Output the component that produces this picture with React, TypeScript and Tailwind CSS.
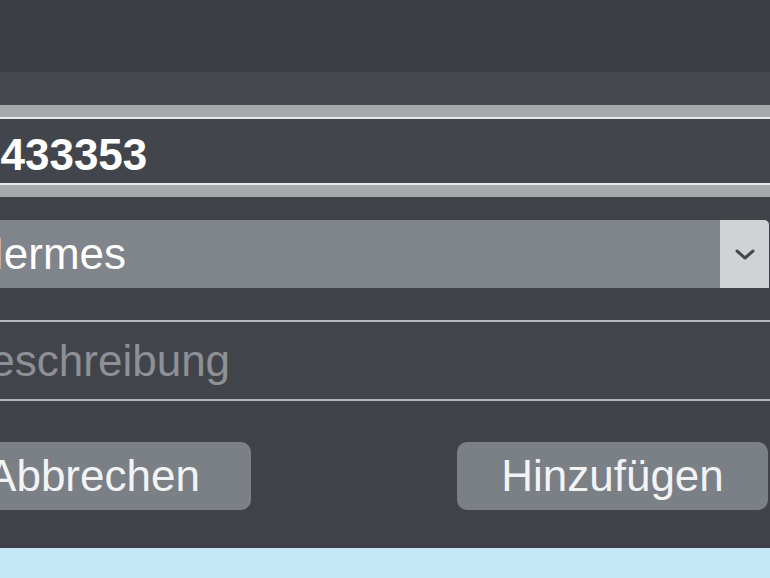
import React from 'react';

const font = { fontFamily: '"Liberation Sans", Arial, sans-serif' };

function App() {
  return (
    <div className="w-[770px] h-[578px] overflow-hidden bg-[#3f4348] flex flex-col" style={font}>
      {/* window chrome above the sheet */}
      <div className="h-[72px] bg-[#3a3d42]" />
      <div className="h-[33px] bg-[#45494e]" />

      <div className="-ml-[40px] w-[810px] flex flex-col">
        {/* number field (focused) */}
        <div className="bg-[#a6a8ab] py-[12px]">
          <div className="h-[68px] border-y-2 border-[#e9eaeb] bg-[#42464c] flex items-center pl-[16px] pt-[7px]">
            <span className="text-[44px] leading-none text-white font-bold">3433353</span>
          </div>
        </div>

        {/* select */}
        <div className="mt-[23px] h-[68px] mr-[1px] flex bg-[#80848b] rounded-tr-[5px] overflow-hidden">
          <div className="flex-1 flex items-center pl-[12px]">
            <span className="text-[44px] leading-none text-white">Hermes</span>
          </div>
          <div className="w-[49px] bg-[#d0d2d6] flex items-center justify-center">
            <svg width="22" height="14" viewBox="0 0 22 14" fill="none">
              <path d="M3 4l8 7 8-7" stroke="#44474c" strokeWidth="3" strokeLinecap="round" strokeLinejoin="round" />
            </svg>
          </div>
        </div>

        {/* description */}
        <div className="mt-[32px] h-[81px] border-y-2 border-[#b3b6ba] bg-[#41454b] flex items-center pl-[1px]">
          <span className="text-[44px] leading-none text-[#8d9095]">Beschreibung</span>
        </div>

        {/* buttons */}
        <div className="mt-[41px] h-[68px] flex">
          <button className="-ml-[24px] w-[315px] h-full rounded-[10px] bg-[#7b7f86] text-[44px] leading-none text-[#f2f3f4]">
            Abbrechen
          </button>
          <button className="ml-auto mr-[2px] w-[311px] h-full rounded-[10px] bg-[#7b7f86] text-[44px] leading-none text-[#f2f3f4]">
            Hinzufügen
          </button>
        </div>
      </div>

      <div className="mt-auto h-[30px] bg-[#c6e7f8]" />
    </div>
  );
}

export default App;
